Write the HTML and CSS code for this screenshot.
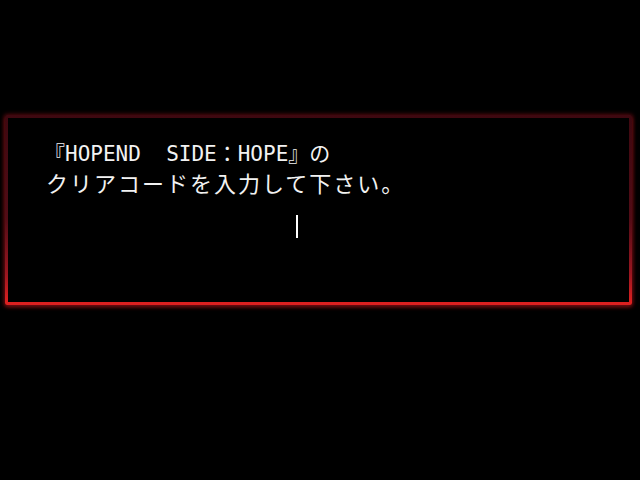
FILE: index.html
```html
<!DOCTYPE html>
<html lang="ja">
<head>
<meta charset="utf-8">
<link rel="stylesheet" href="styles.css">
</head>
<body>
<div class="frame">
  <div class="panel">
    <p class="line line1">『HOPEND  SIDE：HOPE』の</p>
    <p class="line line2">クリアコードを入力して下さい。</p>
    <div class="input"><span class="caret"></span></div>
  </div>
</div>
</body>
</html>
```
FILE: styles.css
```css
html, body {
  margin: 0;
  padding: 0;
  background: #000;
  width: 640px;
  height: 480px;
  overflow: hidden;
}
.frame {
  margin: 115px 0 0 5px;
  width: 627px;
  height: 190px;
  box-sizing: border-box;
  padding: 3px 3px 0 3px;
  border-bottom: 3px solid #dc2020;
  background: linear-gradient(to bottom, #3e0810 0%, #520c16 55%, #9a1620 85%, #dc2020 100%);
  box-shadow: 0 0 4px 1px rgba(130, 14, 24, 0.55), 0 2px 4px 0 rgba(220, 30, 30, 0.5);
  border-radius: 2px;
}
.panel {
  background: #000;
  height: 100%;
  box-sizing: border-box;
  padding: 22px 0 0 36px;
  color: #f2f2f2;
}
.line {
  margin: 0;
  font-size: 22px;
  line-height: 29px;
  white-space: pre;
}
.line1 {
  font-family: "DejaVu Sans Mono", "Noto Sans CJK JP", monospace;
  font-size: 21px;
}
.line2 {
  font-family: "Noto Sans CJK JP", sans-serif;
  letter-spacing: 2px;
  padding-left: 2px;
  line-height: 27px;
}
.input {
  display: flex;
  padding: 19px 0 0 252px;
}
.caret {
  display: block;
  width: 2px;
  height: 23px;
  background: #fff;
}
```
